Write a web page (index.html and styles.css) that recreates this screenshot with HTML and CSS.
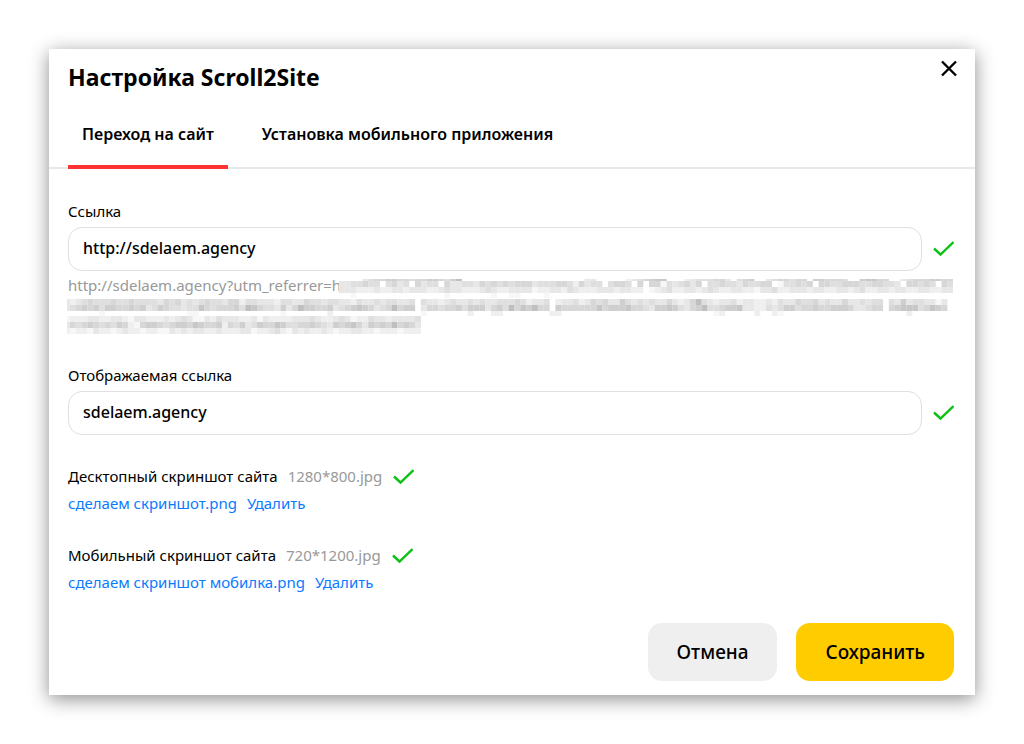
FILE: index.html
```html
<!DOCTYPE html>
<html lang="ru">
<head>
<meta charset="utf-8">
<title>Настройка Scroll2Site</title>
<link rel="stylesheet" href="styles.css">
</head>
<body>
<main class="dialog" role="dialog" aria-labelledby="title">
  <header class="head">
    <h1 class="title" id="title">Настройка Scroll2Site</h1>
    <button class="close" type="button" aria-label="Закрыть">
      <svg width="18" height="18" viewBox="0 0 18 18"><path d="M2 1.5L16 15.5M16 1.5L2 15.5" fill="none" stroke="#000" stroke-width="2.4"/></svg>
    </button>
  </header>
  <nav class="tabs" role="tablist">
    <button class="tab tab-active" type="button" role="tab" aria-selected="true">Переход на сайт</button>
    <button class="tab" type="button" role="tab" aria-selected="false">Установка мобильного приложения</button>
  </nav>
  <form class="form">
    <div class="field">
      <label class="label" for="link">Ссылка</label>
      <div class="row">
        <input class="input" id="link" type="text" value="http://sdelaem.agency">
        <svg class="check" width="22" height="18" viewBox="0 0 22 18"><path d="M2 8.5L8.5 14.5L21.5 2"/></svg>
      </div>
      <div class="hint">
        <span class="hint-text">http://sdelaem.agency?utm_referrer=h</span>
        <svg class="mosaic" id="mosaic" viewBox="0 0 886 62" preserveAspectRatio="xMinYMin meet" aria-hidden="true"></svg>
      </div>
    </div>
    <div class="field">
      <label class="label" for="shown">Отображаемая ссылка</label>
      <div class="row">
        <input class="input" id="shown" type="text" value="sdelaem.agency">
        <svg class="check" width="22" height="18" viewBox="0 0 22 18"><path d="M2 8.5L8.5 14.5L21.5 2"/></svg>
      </div>
    </div>
    <div class="shot">
      <div class="line">
        <span>Десктопный скриншот сайта</span>
        <span class="size">1280*800.jpg</span>
        <svg class="check" width="22" height="18" viewBox="0 0 22 18"><path d="M2 8.5L8.5 14.5L21.5 2"/></svg>
      </div>
      <div class="line">
        <a class="link" href="#">сделаем скриншот.png</a>
        <a class="link" href="#">Удалить</a>
      </div>
    </div>
    <div class="shot">
      <div class="line">
        <span>Мобильный скриншот сайта</span>
        <span class="size">720*1200.jpg</span>
        <svg class="check" width="22" height="18" viewBox="0 0 22 18"><path d="M2 8.5L8.5 14.5L21.5 2"/></svg>
      </div>
      <div class="line">
        <a class="link" href="#">сделаем скриншот мобилка.png</a>
        <a class="link" href="#">Удалить</a>
      </div>
    </div>
    <footer class="actions">
      <button class="btn" type="button">Отмена</button>
      <button class="btn btn-main" type="submit">Сохранить</button>
    </footer>
  </form>
</main>
<script src="mosaic.js"></script>
</body>
</html>
```
FILE: mosaic.js
```js
// Each row: top, height, first column, grey level per cell (0 = white), columns left white.
var rows = [
  [6, 2, 47, "0000345566554556654680000000000000000000003300000234567700023444553045600345545506655540067755003455566554305566745", []],
  [8, 6, 47, "334454424534253442533443545454555344455425344345542555514345355445443544555144545455445554455443455454154556", [54, 59, 64, 92, 97, 99, 109, 121, 128, 143, 149]],
  [14, 6, 47, "333222322332333223433222343223333122332432223332332231234223323432233221334223332332233234223323322332233234", [99]],
  [20, 5, 0, "000000000000000000000000000000000000000000000000010000000000000001000000010011000010000000000000000000", []],
  [26, 6, 0, "3234544454454444354534345443552443332443354434433243343443342433234334343344454233442334235453364343433532358432334233223243354453433533434474363443313353443355443", [60, 83, 140]],
  [32, 6, 0, "3456564665565634654434475455564875443635866556345676534585665355455646663564857685566555555756667554366764356844566733224346645565566653345565677745765663555567456", [60, 83, 140]],
  [38, 5, 0, "00000010000000000000011000000000000001000000020000000000000001000000020002200000000220000000000000000000000000012000002002100000000000000000000020000", []],
  [43, 6, 0, "1222332233213322232343113243332231322223334322343122433233334", []],
  [49, 6, 0, "3545654546521566545665765562546346557644556543656753656585653", []],
  [55, 6, 0, "2122132212322122113232332232223312234213232232122332212221222", []]
];
var svg = document.getElementById("mosaic");
rows.forEach(function (row) {
  row[3].split("").forEach(function (level, i) {
    var column = row[2] + i;
    var last = row[0] < 20 ? 151 : 150;
    if (level === "0" || column > last || row[4].indexOf(column) >= 0) return;
    var left = Math.max(3, column * 5.85);
    var cell = document.createElementNS("http://www.w3.org/2000/svg", "rect");
    var shade = 255 - level * 8;
    cell.setAttribute("x", left - 3);
    cell.setAttribute("y", row[0]);
    cell.setAttribute("width", (column + 1) * 5.85 - left + 0.1);
    cell.setAttribute("height", row[1]);
    cell.setAttribute("fill", "rgb(" + shade + "," + shade + "," + shade + ")");
    svg.appendChild(cell);
  });
});
```
FILE: styles.css
```css
* { box-sizing: border-box; }
body {
  margin: 0;
  padding: 49px;
  background: #fff;
  color: #000;
  font: 15px/20px "Noto Sans", sans-serif;
}
button, input { font-family: inherit; color: inherit; }
.dialog {
  background: #fff;
  box-shadow: 0 4px 18px rgba(0, 0, 0, 0.45);
}
.head {
  display: flex;
  justify-content: space-between;
  align-items: flex-start;
  padding: 10px 16px 0 19px;
}
.title {
  margin: 2px 0;
  font-size: 23px;
  line-height: 32px;
  font-weight: 700;
}
.close {
  display: flex;
  padding: 1px;
  border: 0;
  background: none;
}
.tabs {
  display: flex;
  gap: 20px;
  padding: 16px 19px 0;
  border-bottom: 2px solid #e8e8e8;
}
.tab {
  height: 58px;
  margin-bottom: -2px;
  padding: 0 14px 8px;
  border: 0;
  border-bottom: 4px solid transparent;
  background: none;
  font-size: 16px;
  font-weight: 600;
}
.tab-active { border-bottom-color: #f33; }
.form { padding: 32px 21px 14px 19px; }
.label {
  display: block;
  margin-bottom: 6px;
}
.row {
  display: flex;
  align-items: center;
  gap: 10px;
}
.input {
  flex: 1;
  min-width: 0;
  height: 44px;
  padding: 0 14px 2px;
  border: 1px solid #e0e0e0;
  border-radius: 14px;
  background: #fff;
  font-size: 16px;
  font-weight: 500;
}
.check {
  flex: none;
  fill: none;
  stroke: #0cc112;
  stroke-width: 2.4;
}
.hint {
  display: grid;
  height: 68px;
  margin: 2px 0 24px;
  color: #999;
}
.hint-text, .mosaic { grid-area: 1 / 1; }
.hint-text { line-height: 24px; }
.mosaic {
  width: 100%;
  margin-left: -1px;
}
.shot { margin-bottom: 25px; }
.field + .shot { margin-top: 28px; }
.line {
  display: flex;
  align-items: center;
  gap: 10px;
  line-height: 27px;
}
.size { color: #999; }
.link {
  color: #0a7aff;
  text-decoration: none;
}
.actions {
  display: flex;
  justify-content: flex-end;
  gap: 19px;
  margin-top: 27px;
}
.btn {
  height: 58px;
  padding: 0 29px;
  border: 0;
  border-radius: 14px;
  background: #efefef;
  font-size: 19px;
  font-weight: 500;
}
.btn-main { background: #fc0; }
```
